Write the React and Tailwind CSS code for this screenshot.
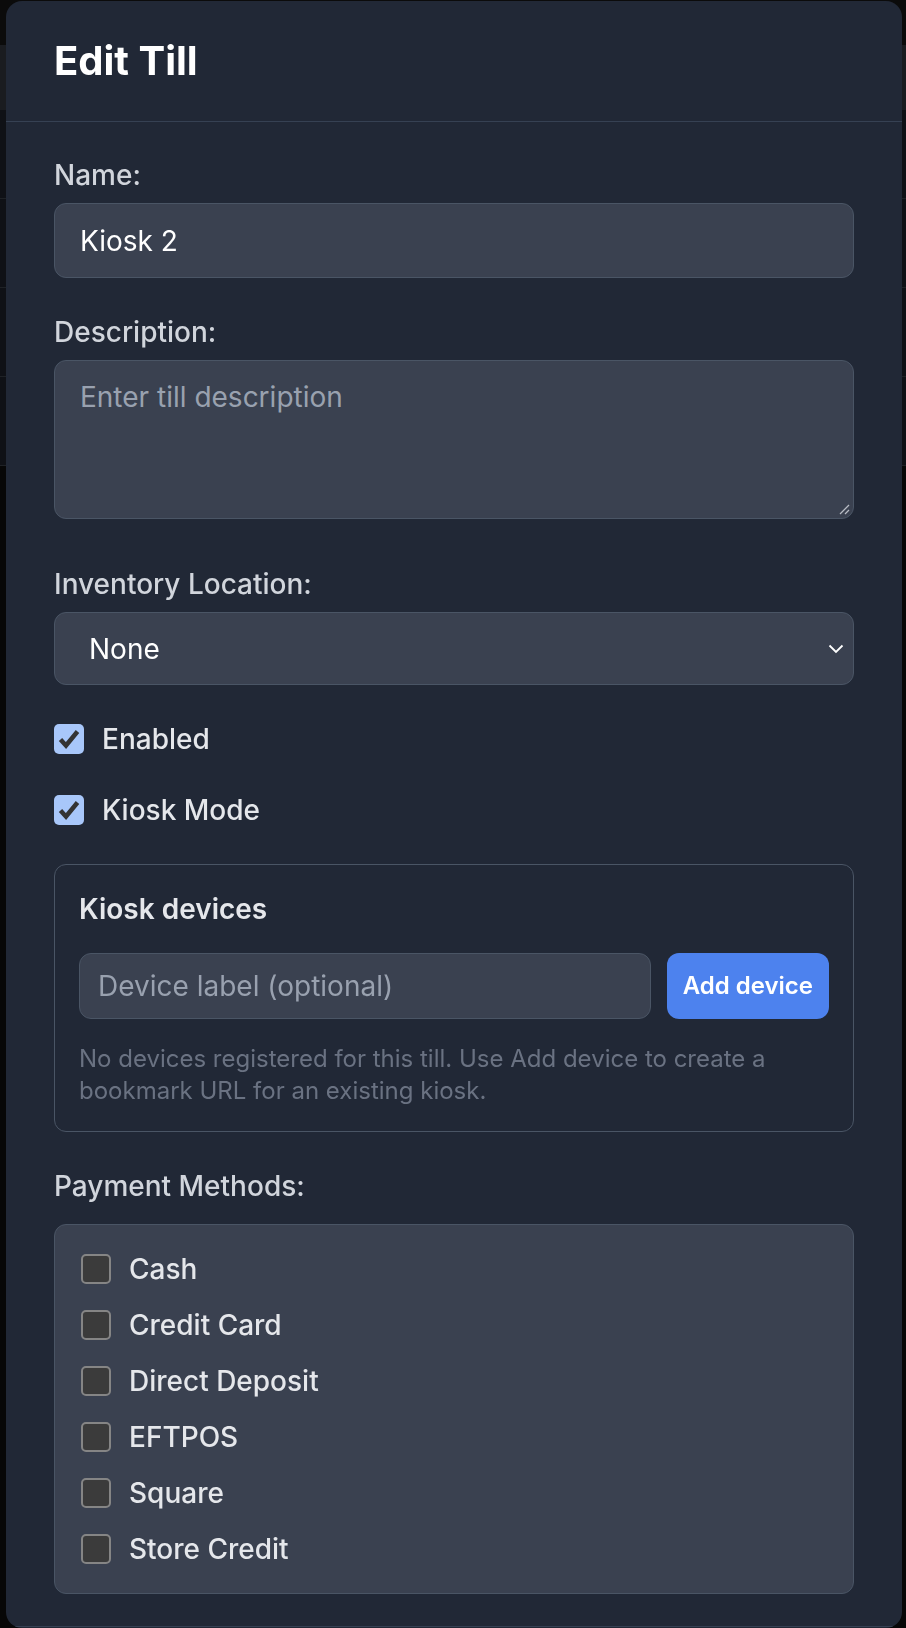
import { useState } from 'react';

const PAYMENT_METHODS = ['Cash', 'Credit Card', 'Direct Deposit', 'EFTPOS', 'Square', 'Store Credit'];

function CheckBox({ checked }) {
  if (checked) {
    return (
      <span className="flex h-[30px] w-[30px] shrink-0 items-center justify-center rounded-[5px] bg-[#a8c7fa]">
        <svg width="30" height="30" viewBox="0 0 30 30" fill="none">
          <path d="M6.5 15.5L12 21.5L23.5 7.5" stroke="#333333" strokeWidth="4.5" strokeLinejoin="miter" />
        </svg>
      </span>
    );
  }
  return <span className="h-[30px] w-[30px] shrink-0 rounded-[5px] border-2 border-[#858585] bg-[#3b3b3b]" />;
}

function FieldLabel({ children, className = '' }) {
  return <div className={`text-[28px] leading-[40px] font-medium text-gray-300 ${className}`}>{children}</div>;
}

export default function App() {
  const [enabled] = useState(true);
  const [kioskMode] = useState(true);

  return (
    <div className="relative min-h-[1628px] bg-[#070707] font-[Inter,'Noto_Sans',sans-serif]">
      {/* table rows of the page behind the dialog */}
      <div className="flex flex-col">
        <div className="h-[45px] bg-[#0b0b0b]" />
        <div className="h-[65px] bg-[#1a1c20]" />
        {[0, 1, 2, 3].map((i) => (
          <div key={i} className="h-[89px] border-b border-[#1f2226] bg-[#0f1116]" />
        ))}
      </div>

      {/* Edit till dialog */}
      <div className="fixed left-[6px] top-[1px] flex h-[1627px] w-[896px] flex-col overflow-hidden rounded-2xl bg-[#212836]">
        <header className="border-b border-gray-700 px-12 py-8">
          <h1 className="text-[40px] leading-[56px] font-bold text-white">Edit Till</h1>
        </header>

        <div className="flex flex-col px-12 pt-[33px] pb-[32px]">
          <FieldLabel className="mb-2">Name:</FieldLabel>
          <div className="flex h-[75px] items-center rounded-xl border border-gray-600 bg-[#3a4150] px-[25px] text-[28px] text-white">
            Kiosk 2
          </div>

          <FieldLabel className="mt-[34px] mb-2">Description:</FieldLabel>
          <div className="relative h-[159px] rounded-xl border border-gray-600 bg-[#3a4150] px-[25px] pt-4 text-[28px] leading-[40px] text-gray-400">
            Enter till description
            <svg className="absolute right-[3px] bottom-[3px]" width="12" height="12" viewBox="0 0 12 12" fill="none">
              <path d="M11 2L2 11" stroke="#b8bcc4" strokeWidth="1.2" />
              <path d="M11 7L7 11" stroke="#b8bcc4" strokeWidth="1.2" />
            </svg>
          </div>

          <FieldLabel className="mt-[45px] mb-2">Inventory Location:</FieldLabel>
          <div className="flex h-[73px] items-center justify-between rounded-xl border border-gray-600 bg-[#3a4150] pr-[9px] pl-[34px] text-[28px] text-white">
            <span>None</span>
            <svg width="16" height="10" viewBox="0 0 16 10" fill="none">
              <path d="M1.5 1.5L8 8L14.5 1.5" stroke="#ffffff" strokeWidth="1.8" />
            </svg>
          </div>

          <label className="mt-[34px] flex h-[40px] items-center gap-[18px]">
            <CheckBox checked={enabled} />
            <span className="text-[28px] font-medium text-gray-200">Enabled</span>
          </label>

          <label className="mt-[31px] flex h-[40px] items-center gap-[18px]">
            <CheckBox checked={kioskMode} />
            <span className="text-[28px] font-medium text-gray-200">Kiosk Mode</span>
          </label>

          {/* kiosk devices */}
          <div className="mt-[34px] rounded-xl border border-gray-600 p-6">
            <h3 className="text-[28px] leading-[40px] font-semibold text-gray-200">Kiosk devices</h3>
            <div className="mt-6 flex gap-4">
              <div className="flex h-[66px] flex-1 items-center rounded-xl border border-gray-600 bg-[#3a4150] px-[18px] text-[28px] text-gray-400">
                Device label (optional)
              </div>
              <button className="h-[66px] rounded-xl bg-[#4d82ee] px-4 text-[24px] font-semibold text-white">
                Add device
              </button>
            </div>
            <p className="mt-6 text-[24px] leading-[32px] text-gray-500">
              No devices registered for this till. Use Add device to create a bookmark URL for an existing kiosk.
            </p>
          </div>

          <FieldLabel className="mt-[34px] mb-[18px]">Payment Methods:</FieldLabel>
          <div className="flex flex-col gap-4 rounded-xl border border-gray-600 bg-[#3a4150] py-6 pr-6 pl-[26px]">
            {PAYMENT_METHODS.map((method) => (
              <label key={method} className="flex h-[40px] items-center gap-[18px]">
                <CheckBox checked={false} />
                <span className="text-[28px] font-medium text-gray-200">{method}</span>
              </label>
            ))}
          </div>
        </div>

        <footer className="border-t border-gray-700 px-12 py-8" />
      </div>
    </div>
  );
}
